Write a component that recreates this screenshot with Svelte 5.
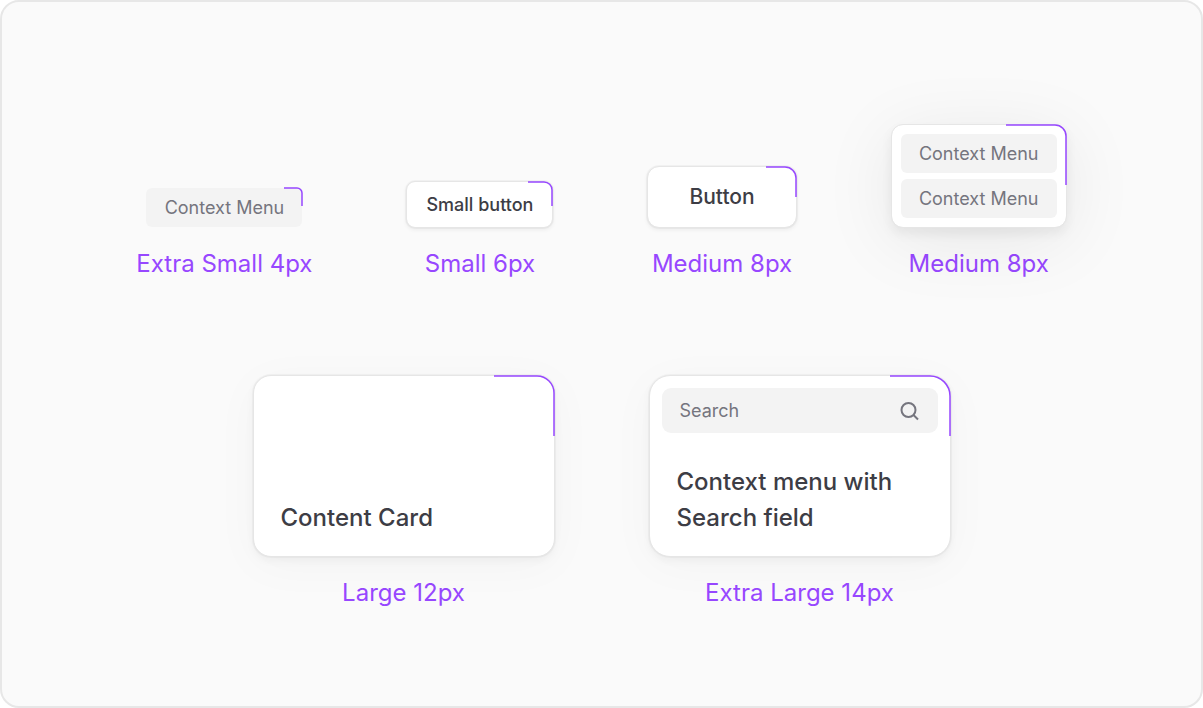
<script>
  const purple = '#9747ff';
</script>

{#snippet corner(w, h, r)}
  <svg class="corner" width={w} height={h} viewBox="0 0 {w} {h}" aria-hidden="true">
    <path d="M0 1H{w - 1 - r}a{r} {r} 0 0 1 {r} {r}V{h}" fill="none" stroke={purple} stroke-width="1.5" />
  </svg>
{/snippet}

<main>
  <section class="row">
    <figure>
      <div class="holder">
        <button class="chip">Context Menu</button>
        {@render corner(19, 19, 5)}
      </div>
      <figcaption>Extra Small 4px</figcaption>
    </figure>

    <figure>
      <button class="surface small">Small button{@render corner(25, 25, 8)}</button>
      <figcaption>Small 6px</figcaption>
    </figure>

    <figure>
      <button class="surface medium">Button{@render corner(31, 31, 11)}</button>
      <figcaption>Medium 8px</figcaption>
    </figure>

    <figure>
      <div class="surface menu">
        <button class="chip">Context Menu</button>
        <button class="chip">Context Menu</button>
        {@render corner(61, 61, 11)}
      </div>
      <figcaption>Medium 8px</figcaption>
    </figure>
  </section>

  <section class="row">
    <figure>
      <article class="surface card">
        <h2>Content Card</h2>
        {@render corner(61, 61, 17)}
      </article>
      <figcaption>Large 12px</figcaption>
    </figure>

    <figure>
      <article class="surface card xl">
        <label class="search">
          <input type="text" placeholder="Search" aria-label="Search" />
          <svg width="20" height="20" viewBox="0 0 20 20" fill="none" stroke="#75757e" stroke-width="2" aria-hidden="true">
            <circle cx="8.5" cy="9" r="7" />
            <path d="M13.5 14l4.5 4.5" />
          </svg>
        </label>
        <h2>Context menu with Search field</h2>
        {@render corner(61, 61, 20)}
      </article>
      <figcaption>Extra Large 14px</figcaption>
    </figure>
  </section>
</main>

<style>
  :global(body) {
    background: #fff;
  }
  main {
    box-sizing: border-box;
    min-height: 100vh;
    padding: 122px 24px 92px;
    display: flex;
    flex-direction: column;
    gap: 93px;
    border: 2px solid #e7e7e7;
    border-radius: 19px;
    background: #fafafa;
    font-family: Inter, sans-serif;
    color: #3d3d45;
  }
  .row {
    display: flex;
    flex-wrap: wrap;
    justify-content: center;
    align-items: flex-end;
    gap: 94px;
  }
  figure {
    margin: 0;
    display: flex;
    flex-direction: column;
    align-items: center;
    gap: 18px;
  }
  figcaption {
    font-size: 24px;
    line-height: 36px;
    color: #9747ff;
  }
  button {
    font: inherit;
    color: inherit;
    cursor: pointer;
  }
  .holder {
    position: relative;
    padding: 1px 0;
  }
  .chip {
    display: block;
    min-width: 156px;
    padding: 6px 18px;
    border: 0;
    border-radius: 6px;
    background: #f3f3f3;
    color: #75757e;
    font-size: 18px;
    line-height: 27px;
  }
  .surface {
    --edge: 0 0 0 1px rgba(0, 0, 0, 0.03);
    position: relative;
    box-sizing: border-box;
    border: 1px solid #e6e6e6;
    background: #fff;
    background-clip: padding-box;
  }
  .corner {
    position: absolute;
    top: -1px;
    right: -1px;
  }
  .holder .corner {
    top: 0;
  }
  .small {
    padding: 9px 19px;
    border-radius: 9px;
    box-shadow: var(--edge), 0 2px 4px rgba(0, 0, 0, 0.06);
    font-size: 18px;
    font-weight: 500;
    line-height: 27px;
  }
  .medium {
    padding: 14px 41px;
    border-radius: 12px;
    box-shadow: var(--edge), 0 2px 4px rgba(0, 0, 0, 0.06);
    font-size: 21px;
    font-weight: 500;
    line-height: 32px;
  }
  .menu {
    padding: 9px;
    display: flex;
    flex-direction: column;
    gap: 6px;
    border-radius: 12px;
    box-shadow: 0 6px 12px rgba(0, 0, 0, 0.06), 0 12px 72px rgba(0, 0, 0, 0.08);
  }
  .card {
    width: 302px;
    min-height: 182px;
    padding: 12px 12px 20px;
    display: flex;
    flex-direction: column;
    justify-content: space-between;
    border-radius: 18px;
    box-shadow: var(--edge), 0 4px 8px rgba(0, 0, 0, 0.04), 0 8px 48px rgba(0, 0, 0, 0.03);
  }
  .card h2 {
    margin: 0 0 0 15px;
    font-size: 24px;
    font-weight: 500;
    line-height: 36px;
  }
  .card h2:first-child {
    margin-top: auto;
  }
  .xl {
    border-radius: 21px;
  }
  .search {
    display: flex;
    align-items: center;
    padding: 9px 18px;
    border-radius: 9px;
    background: #f3f3f3;
  }
  .search input {
    flex: 1;
    min-width: 0;
    height: 27px;
    padding: 0;
    border: 0;
    outline: 0;
    background: transparent;
    color: #75757e;
    font: 18px/27px Inter, sans-serif;
  }
  .search input::placeholder {
    color: #75757e;
    opacity: 1;
  }
</style>
